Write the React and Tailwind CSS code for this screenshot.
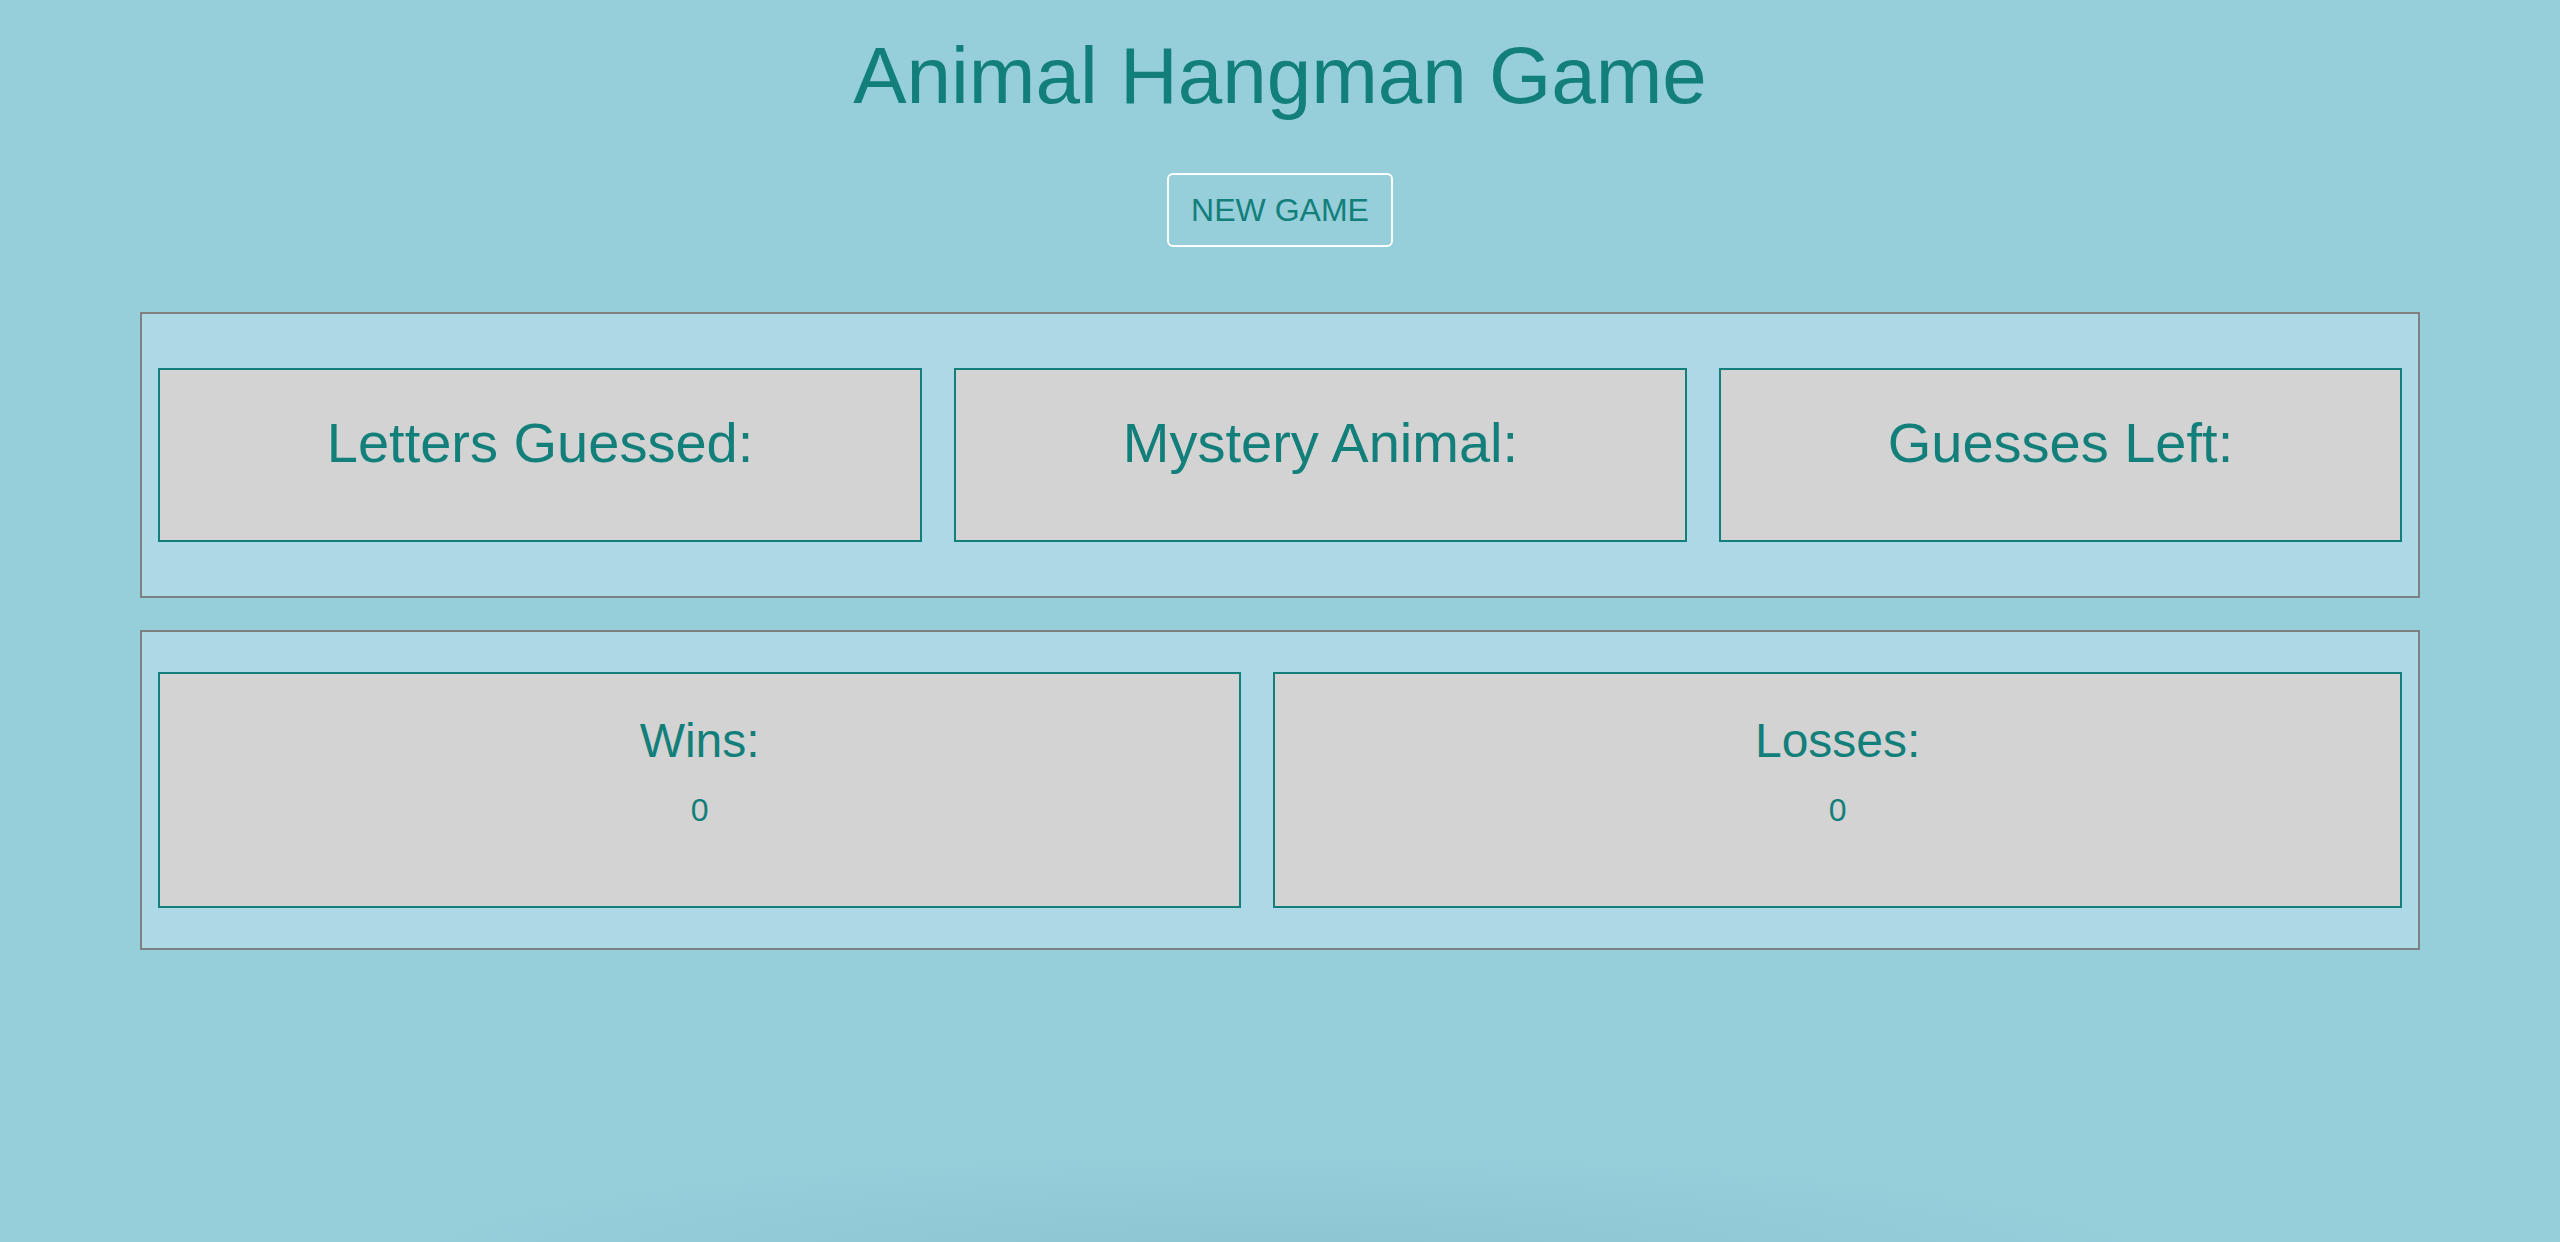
import React from 'react';

function StatBox({ label, value }) {
  return (
    <div className="flex-auto h-[236px] border-2 border-[#127f7a] bg-[#d3d3d3] pt-[39px] text-center">
      <h3 className="text-[48px] leading-[56px]">{label}</h3>
      <p className="mt-[21px] text-[32px] leading-[40px]">{value}</p>
    </div>
  );
}

function InfoBox({ label, children }) {
  return (
    <div className="flex-auto h-[174px] border-2 border-[#127f7a] bg-[#d3d3d3] pt-[41px] text-center">
      <h2 className="text-[56px] leading-[64px]">{label}</h2>
      {children}
    </div>
  );
}

export default function App() {
  return (
    <div className="min-h-[1242px] bg-[#96ceda] bg-[radial-gradient(ellipse_900px_110px_at_50%_1262px,#8cc5d2,#96ceda)] pb-[60px] font-['Liberation_Sans',Arial,sans-serif] text-[#127f7a]">
      <h1 className="pt-[30px] text-center text-[80px] leading-[92px]">Animal Hangman Game</h1>

      <div className="mt-[51px] flex justify-center">
        <button
          type="button"
          className="flex h-[74px] w-[226px] items-center justify-center rounded-md border-2 border-white text-[32px] leading-[37px] text-[#127f7a]"
        >
          NEW GAME
        </button>
      </div>

      <section className="mx-[140px] mt-[65px] border-2 border-[#808080] bg-[#add8e6] px-[16px] py-[54px]">
        <div className="flex gap-[32px]">
          <InfoBox label="Letters Guessed:" />
          <InfoBox label="Mystery Animal:" />
          <InfoBox label="Guesses Left:" />
        </div>
      </section>

      <section className="mx-[140px] mt-[32px] border-2 border-[#808080] bg-[#add8e6] px-[16px] pt-[40px] pb-[40px]">
        <div className="flex gap-[32px]">
          <StatBox label="Wins:" value={0} />
          <StatBox label="Losses:" value={0} />
        </div>
      </section>
    </div>
  );
}
